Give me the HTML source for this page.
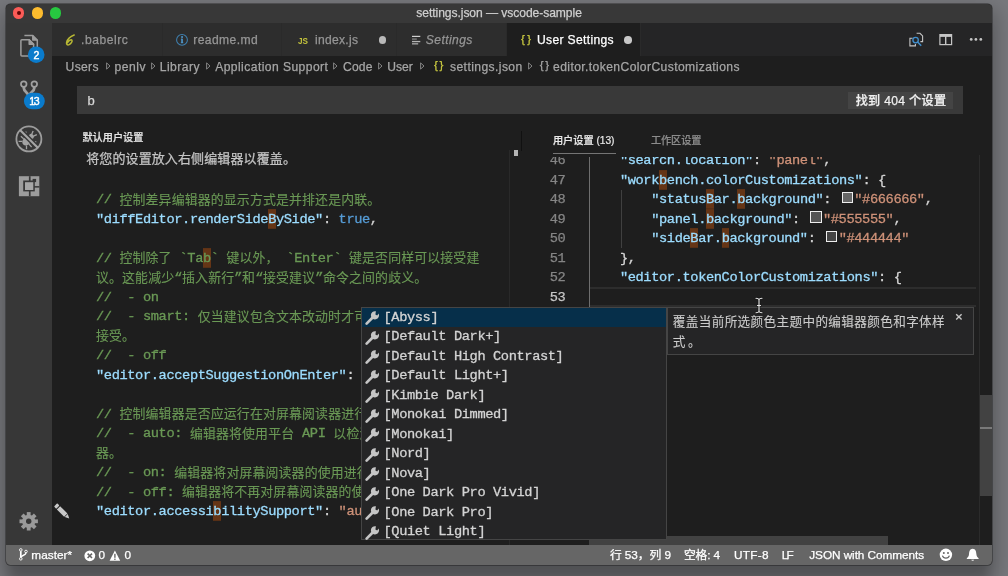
<!DOCTYPE html>
<html lang="zh-CN">
<head>
<meta charset="utf-8">
<title>settings.json — vscode-sample</title>
<style>
*{box-sizing:border-box;margin:0;padding:0}
html,body{width:1008px;height:576px;overflow:hidden}
body{position:relative;background:#77787c;font-family:"Liberation Sans","Noto Sans CJK SC",sans-serif;font-size:12px;color:#ccc}
.abs{position:absolute}
#win{position:absolute;left:6px;top:4px;width:986px;height:561px;border-radius:4.5px;overflow:hidden;background:#1e1e1e;box-shadow:0 0 0 0.7px rgba(0,0,0,.4),0 10px 18px 6px rgba(0,0,0,.22),0 22px 12px -4px rgba(0,0,0,.14)}
#inner{position:absolute;left:-6px;top:-4px;width:1008px;height:576px;will-change:transform}
#title{left:6px;top:4px;width:986px;height:19px;background:#383838}
.tl{position:absolute;top:7.3px;width:11.3px;height:11.3px;border-radius:50%}
#act{left:6px;top:23px;width:46px;height:522px;background:#373737}
#tabs{left:52px;top:23px;width:940px;height:33px;background:#252526}
.tab{position:absolute;top:23px;height:33px;background:#2d2d2d;border-right:1px solid #2a2a2a}
.tab.on{background:#1e1e1e}
#search{left:77px;top:86px;width:885.5px;height:28px;background:#393939}
#status{left:6px;top:545px;width:986px;height:20px;background:#666}
.t{position:absolute;height:40px;line-height:40px;white-space:pre;-webkit-text-stroke:0.25px}
.mono,.ln{font-family:"Liberation Mono","Noto Sans CJK SC",monospace;font-size:13.7px;letter-spacing:-0.39px}
.ln i{font-style:normal;font-size:12.9px;letter-spacing:0.15px;-webkit-text-stroke:0.12px;position:relative;top:0.6px}
.ln{position:absolute;height:19.5px;line-height:19.5px;white-space:pre;color:#d4d4d4;margin-top:0.6px;-webkit-text-stroke:0.3px}
.c{color:#6a9955}.k{color:#9cdcfe}.s{color:#ce9178}.b{color:#569cd6}.p{color:#d4d4d4}
.hl{background:#653516;box-shadow:0 -2.9px 0 #653516,0 1.8px 0 #653516}
.num{position:absolute;left:530px;width:35.4px;height:19.5px;line-height:19.5px;text-align:right;color:#858585;font-family:"Liberation Mono",monospace;font-size:13.7px;letter-spacing:-0.39px;margin-top:0.6px;-webkit-text-stroke:0.25px}
.sw{display:inline-block;width:11.2px;height:11.2px;border:1.2px solid #eee;margin:0 1.4px 0 2.7px;vertical-align:0.1px}
.row{position:absolute;left:361.5px;width:304px;height:19.5px;line-height:19.5px;color:#d4d4d4;font-family:"Liberation Mono",monospace;font-size:13.7px;letter-spacing:-0.39px;-webkit-text-stroke:0.3px;white-space:pre;padding-left:22px}
.arr{position:absolute;top:61.9px}
svg{position:absolute;overflow:visible}
</style>
</head>
<body>
<div id="win"><div id="inner">

<!-- title bar -->
<div id="title" class="abs"></div>
<div class="tl" style="left:12.9px;background:#fc5b57"></div>
<div class="tl" style="left:16.5px;top:10.9px;width:4px;height:4px;background:#5e0605"></div>
<div class="tl" style="left:31.6px;background:#fdbc2e"></div>
<div class="tl" style="left:50px;background:#27c840"></div>

<!-- activity bar -->
<div id="act" class="abs"></div>
<!-- explorer -->
<svg style="left:6px;top:24px" width="48" height="48" viewBox="0 0 48 48"><g fill="none" stroke="#9d9d9d" stroke-width="1.5" stroke-linejoin="round"><path d="M18.4 11.6 L26.8 11.6 L31.3 16.1 L31.3 26"/><path d="M26.8 11.6 L26.8 16.1 L31.3 16.1" fill="#9d9d9d"/><path d="M15.8 15.8 L23.2 15.8 L27.6 20.2 L27.6 31.4 Q27.6 31.9 27.1 31.9 L15.8 31.9 Q14.9 31.9 14.9 31 L14.9 16.7 Q14.9 15.8 15.8 15.8 Z"/><path d="M23.2 15.8 L23.2 20.2 L27.6 20.2 Z" fill="#9d9d9d"/></g><circle cx="30.2" cy="30.7" r="8.3" fill="#0a7bcc"/></svg>
<!-- scm -->
<svg style="left:6px;top:72px" width="48" height="48" viewBox="0 0 48 48"><g fill="none" stroke="#a0a0a0"><circle cx="17.75" cy="12.1" r="2.8" stroke-width="1.7"/><circle cx="28.3" cy="12.1" r="2.8" stroke-width="1.7"/><path d="M17.9 15 L17.9 16.6 C17.9 19.6 22.2 20.4 22.6 24" stroke-width="2.8"/><path d="M28.2 15 L28.2 16.6 C28.2 19.6 23.4 20.4 23 24" stroke-width="2.8"/></g><rect x="17.9" y="20.8" width="20.9" height="16.5" rx="8.25" fill="#0a7bcc"/></svg>
<!-- debug (disabled bug) -->
<svg style="left:6px;top:116px" width="48" height="48" viewBox="0 0 48 48"><circle cx="22.9" cy="22.9" r="12.5" fill="none" stroke="#9d9d9d" stroke-width="1.8"/><g transform="translate(22.9,22.9) rotate(45)" fill="#a2a2a2" stroke="#a2a2a2"><ellipse cx="0" cy="3.3" rx="3.9" ry="4.7" stroke="none"/><ellipse cx="0" cy="-3.6" rx="2.7" ry="2.3" stroke="none"/><path d="M-1.2 -5.2 L-2.6 -8.6 M1.2 -5.2 L2.6 -8.6 M-3.4 1 L-6.6 -1 L-7 -3.4 M3.4 1 L6.6 -1 L7 -3.4 M-3.8 3.6 L-7.6 3.8 M3.8 3.6 L7.6 3.8 M-3 6.4 L-5.6 9 M3 6.4 L5.6 9" fill="none" stroke-width="1.3"/></g><path d="M15.6 15.6 L30.2 30.2" stroke="#373737" stroke-width="5"/><path d="M14 14 L31.8 31.8" stroke="#a6a6a6" stroke-width="2.1"/></svg>
<!-- extensions -->
<svg style="left:6px;top:162px" width="48" height="48" viewBox="0 0 48 48"><rect x="12.9" y="14.2" width="20.4" height="20" fill="#9c9c9c"/><rect x="22.9" y="14.2" width="1.7" height="20" fill="#373737"/><rect x="28" y="24.1" width="5.4" height="1.5" fill="#373737"/><rect x="26.6" y="16.9" width="3.5" height="3.2" fill="#373737"/><rect x="17.2" y="18.5" width="11.6" height="10.9" fill="#373737"/><rect x="19" y="20.2" width="8.3" height="7.8" fill="#a6a6a6"/></svg>
<!-- gear -->
<svg style="left:6px;top:496px" width="48" height="48" viewBox="0 0 48 48"><g transform="translate(22.7,25.3)"><g fill="#9a9a9a"><rect x="-1.9" y="-9.2" width="3.8" height="18.4"/><rect x="-1.9" y="-9.2" width="3.8" height="18.4" transform="rotate(45)"/><rect x="-1.9" y="-9.2" width="3.8" height="18.4" transform="rotate(90)"/><rect x="-1.9" y="-9.2" width="3.8" height="18.4" transform="rotate(135)"/><circle r="6.6"/></g><circle r="2.7" fill="#373737"/></g></svg>


<!-- tabs -->
<div id="tabs" class="abs"></div>
<div class="tab" style="left:52px;width:111px"></div>
<div class="tab" style="left:163px;width:119px"></div>
<div class="tab" style="left:282px;width:115px"></div>
<div class="tab" style="left:397px;width:110px"></div>
<div class="tab on" style="left:507px;width:134px"></div>
<div class="abs" style="left:378.7px;top:36.1px;width:7.6px;height:7.6px;border-radius:50%;background:#b9b9b9"></div>
<div class="abs" style="left:624px;top:36.1px;width:7.6px;height:7.6px;border-radius:50%;background:#c8c8c8"></div>
<!-- babel -->
<svg style="left:64px;top:33px" width="12" height="14" viewBox="0 0 12 14"><path d="M10.2 2 C6.8 3.2 3.4 6.2 2.6 9.4 C2.1 11.6 3.6 12.4 5.2 11.6 C7.2 10.6 8.6 8.4 7.9 7.2 C7.2 6.2 4.6 7.6 3.6 9.6" fill="none" stroke="#b9b934" stroke-width="1.5" stroke-linecap="round"/></svg>
<!-- info -->
<svg style="left:175px;top:33px" width="14" height="14" viewBox="0 0 14 14"><circle cx="7" cy="6.9" r="5.4" fill="none" stroke="#3f80b0" stroke-width="1.05"/><rect x="6.25" y="5.7" width="1.6" height="4.3" fill="#4f9ad0"/><rect x="5.9" y="5.7" width="1.2" height="0.8" fill="#4f9ad0"/><rect x="5.8" y="9.4" width="2.5" height="0.8" fill="#4f9ad0"/><circle cx="7.05" cy="4" r="1" fill="#4f9ad0"/></svg>
<!-- settings list icon -->
<svg style="left:411px;top:35px" width="11" height="11" viewBox="0 0 11 11"><rect x="1" y="0.8" width="8.3" height="1.2" fill="#d0d0d0"/><rect x="1" y="3.3" width="4.8" height="1.6" fill="#747474"/><rect x="1" y="5.9" width="8.3" height="1.3" fill="#b4b4b4"/><rect x="1" y="8" width="6.2" height="1.6" fill="#929292"/></svg>
<!-- open settings -->
<svg style="left:908px;top:31px" width="17" height="17" viewBox="0 0 17 17"><g fill="none" stroke="#c5c5c5" stroke-width="1.1"><path d="M8.6 2.3 L12 2.3 L14.6 4.9 L14.6 10.6 L12.4 10.6"/><path d="M4.6 7.3 L1.9 7.3 L1.9 14.9 L7.4 14.9 L7.4 13"/></g><circle cx="7.6" cy="9.1" r="2.7" fill="none" stroke="#4190cf" stroke-width="1.3"/><path d="M9.6 11.1 L13.2 14.8" stroke="#4190cf" stroke-width="1.5"/></svg>
<!-- split editor -->
<svg style="left:938px;top:32px" width="16" height="15" viewBox="0 0 16 15"><rect x="1.3" y="2" width="12.9" height="11.2" fill="#c5c5c5"/><rect x="2.5" y="4.9" width="4.5" height="7.1" fill="#252526"/><rect x="8.4" y="4.9" width="4.6" height="7.1" fill="#252526"/></svg>
<!-- more -->
<svg style="left:968px;top:36px" width="16" height="7" viewBox="0 0 16 7"><g fill="#c5c5c5"><circle cx="3.2" cy="3.4" r="1.4"/><circle cx="7.9" cy="3.4" r="1.4"/><circle cx="12.8" cy="3.4" r="1.4"/></g></svg>
<!-- js -->
<svg style="left:297px;top:34px" width="13" height="12" viewBox="0 0 13 12"><text x="1" y="9.9" font-family="'Liberation Sans',sans-serif" font-weight="bold" font-size="9.7" fill="#c4c43c" textLength="10" lengthAdjust="spacingAndGlyphs">JS</text></svg>


<!-- breadcrumb arrows -->
<svg class="arr" style="left:105.8px" width="5" height="8" viewBox="0 0 5 8"><path d="M0.6 0.9 L0.6 7.1 L4 4 Z" fill="none" stroke="#909090" stroke-width="0.9" stroke-linejoin="round"/></svg>
<svg class="arr" style="left:151.2px" width="5" height="8" viewBox="0 0 5 8"><path d="M0.6 0.9 L0.6 7.1 L4 4 Z" fill="none" stroke="#909090" stroke-width="0.9" stroke-linejoin="round"/></svg>
<svg class="arr" style="left:206.2px" width="5" height="8" viewBox="0 0 5 8"><path d="M0.6 0.9 L0.6 7.1 L4 4 Z" fill="none" stroke="#909090" stroke-width="0.9" stroke-linejoin="round"/></svg>
<svg class="arr" style="left:333.1px" width="5" height="8" viewBox="0 0 5 8"><path d="M0.6 0.9 L0.6 7.1 L4 4 Z" fill="none" stroke="#909090" stroke-width="0.9" stroke-linejoin="round"/></svg>
<svg class="arr" style="left:377.7px" width="5" height="8" viewBox="0 0 5 8"><path d="M0.6 0.9 L0.6 7.1 L4 4 Z" fill="none" stroke="#909090" stroke-width="0.9" stroke-linejoin="round"/></svg>
<svg class="arr" style="left:419.8px" width="5" height="8" viewBox="0 0 5 8"><path d="M0.6 0.9 L0.6 7.1 L4 4 Z" fill="none" stroke="#909090" stroke-width="0.9" stroke-linejoin="round"/></svg>
<svg class="arr" style="left:528.2px" width="5" height="8" viewBox="0 0 5 8"><path d="M0.6 0.9 L0.6 7.1 L4 4 Z" fill="none" stroke="#909090" stroke-width="0.9" stroke-linejoin="round"/></svg>

<!-- search -->
<div id="search" class="abs"></div>
<div class="abs" style="left:848px;top:92.2px;width:105px;height:16.5px;background:#444"></div>

<!-- ===== left editor (default settings) ===== -->
<div class="abs" style="left:52px;top:150px;width:458px;height:395px;overflow:hidden">
<div class="abs" style="left:-52px;top:-150px;width:1008px;height:576px">
<div class="ln" style="left:96px;top:189.5px"><span class="c">// <i>控制差异编辑器的显示方式是并排还是内联。</i></span></div>
<div class="ln" style="left:96px;top:209px"><span class="k">"diffEditor.renderSide<span class="hl">B</span>ySide"</span>: <span class="b">true</span>,</div>
<div class="ln" style="left:96px;top:248px"><span class="c">// <i>控制除了</i> `Ta<span class="hl">b</span>` <i>键以外，</i> `Enter` <i>键是否同样可以接受建</i></span></div>
<div class="ln" style="left:96px;top:267.5px"><span class="c"><i>议。这能减少</i>“<i>插入新行</i>”<i>和</i>“<i>接受建议</i>”<i>命令之间的歧义。</i></span></div>
<div class="ln" style="left:96px;top:287px"><span class="c">//  - on</span></div>
<div class="ln" style="left:96px;top:306.5px"><span class="c">//  - smart: <i>仅当建议包含文本改动时才可使用</i> `Enter` <i>键</i></span></div>
<div class="ln" style="left:96px;top:326px"><span class="c"><i>接受。</i></span></div>
<div class="ln" style="left:96px;top:345.5px"><span class="c">//  - off</span></div>
<div class="ln" style="left:96px;top:365px"><span class="k">"editor.acceptSuggestionOnEnter"</span>: <span class="s">"on"</span>,</div>
<div class="ln" style="left:96px;top:404px"><span class="c">// <i>控制编辑器是否应运行在对屏幕阅读器进行优化的模式。</i></span></div>
<div class="ln" style="left:96px;top:423.5px"><span class="c">//  - auto: <i>编辑器将使用平台</i> API <i>以检测是否附加了屏幕阅读</i></span></div>
<div class="ln" style="left:96px;top:443px"><span class="c"><i>器。</i></span></div>
<div class="ln" style="left:96px;top:462.5px"><span class="c">//  - on: <i>编辑器将对屏幕阅读器的使用进行永久优化。</i></span></div>
<div class="ln" style="left:96px;top:482px"><span class="c">//  - off: <i>编辑器将不再对屏幕阅读器的使用进行优化。</i></span></div>
<div class="ln" style="left:96px;top:501.5px"><span class="k">"editor.accessi<span class="hl">b</span>ilitySupport"</span>: <span class="s">"auto"</span>,</div>
</div></div>
<!-- pencil -->
<svg style="left:54px;top:503px" width="18" height="18" viewBox="0 0 18 18"><g transform="translate(1.6,1.9) rotate(45)"><rect x="0" y="-2.3" width="3.2" height="4.6" rx="0.8" fill="#c8c8c8"/><rect x="4.1" y="-2.3" width="10.3" height="4.6" fill="#c8c8c8"/><path d="M15.1 -2.1 L19.3 0 L15.1 2.1 Z" fill="#c8c8c8"/></g></svg>
<!-- separators between editors -->
<div class="abs" style="left:520.7px;top:131px;width:1.2px;height:19.5px;background:#111"></div>
<div class="abs" style="left:509px;top:150px;width:1px;height:395px;background:#292929"></div>
<div class="abs" style="left:513.6px;top:150.3px;width:4.9px;height:5.7px;background:#b4b4b4"></div>
<div class="abs" style="left:552.8px;top:153px;width:63px;height:1px;background:#757575"></div>

<!-- ===== right editor (user settings) ===== -->
<div class="abs" style="left:522px;top:157px;width:470px;height:388px;overflow:hidden">
<div class="abs" style="left:-522px;top:-157px;width:1008px;height:576px">
<!-- current line -->
<div class="abs" style="left:589px;top:287.1px;width:387px;height:20.2px;border-top:2px solid #2d2d2d;border-bottom:2px solid #2d2d2d"></div>
<!-- indent guides -->
<div class="abs" style="left:588.9px;top:150px;width:1.3px;height:395px;background:#6e6e6e"></div>
<div class="abs" style="left:620.7px;top:189.5px;width:1px;height:58.5px;background:#404040"></div>
<div class="num" style="top:150.5px">46</div>
<div class="num" style="top:170px">47</div>
<div class="num" style="top:189.5px">48</div>
<div class="num" style="top:209px">49</div>
<div class="num" style="top:228.5px">50</div>
<div class="num" style="top:248px">51</div>
<div class="num" style="top:267.5px">52</div>
<div class="num" style="top:287px;color:#c6c6c6">53</div>
<div class="ln" style="left:588.6px;top:150.5px">    <span class="k">"search.location"</span>: <span class="s">"panel"</span>,</div>
<div class="ln" style="left:588.6px;top:170px">    <span class="k">"work<span class="hl">b</span>ench.colorCustomizations"</span>: {</div>
<div class="ln" style="left:588.6px;top:189.5px">        <span class="k">"status<span class="hl">B</span>ar.<span class="hl">b</span>ackground"</span>: <span class="sw" style="background:#666"></span><span class="s">"#666666"</span>,</div>
<div class="ln" style="left:588.6px;top:209px">        <span class="k">"panel.<span class="hl">b</span>ackground"</span>: <span class="sw" style="background:#555"></span><span class="s">"#555555"</span>,</div>
<div class="ln" style="left:588.6px;top:228.5px">        <span class="k">"side<span class="hl">B</span>ar.<span class="hl">b</span>ackground"</span>: <span class="sw" style="background:#444"></span><span class="s">"#444444"</span></div>
<div class="ln" style="left:588.6px;top:248px">    },</div>
<div class="ln" style="left:588.6px;top:267.5px">    <span class="k">"editor.tokenColorCustomizations"</span>: {</div>
</div></div>
<!-- vertical scrollbar -->
<div class="abs" style="left:979px;top:155px;width:1px;height:390px;background:#2b2b2b"></div>
<div class="abs" style="left:979.5px;top:394.5px;width:12.5px;height:101.5px;background:#424242"></div>
<div class="abs" style="left:979.5px;top:426.8px;width:12.5px;height:1.8px;background:#7a7a7a"></div>
<!-- horizontal scrollbar -->
<div class="abs" style="left:589px;top:536.3px;width:299px;height:8.7px;background:#424242"></div>

<!-- ===== suggest widget ===== -->
<div class="abs" style="left:360.6px;top:306.5px;width:306.7px;height:233.6px;background:#252526;border:1px solid #454545"></div>
<div class="abs" style="left:361.6px;top:307.5px;width:304.7px;height:19.5px;background:#062f4a"></div>
<div class="row" style="top:307.5px"><svg style="left:3px;top:3.5px" width="15" height="14" viewBox="0 0 15 14"><path d="M1.6 12.6 L8.4 5.8" stroke="#c5c5c5" stroke-width="2.7" stroke-linecap="round" fill="none"/><path d="M13.6 2.4 A4.1 4.1 0 1 1 10.9 0.3 L10.4 3.5 L12.2 4.6 Z" fill="#c5c5c5"/></svg>[Abyss]</div>
<div class="row" style="top:327.0px"><svg style="left:3px;top:3.5px" width="15" height="14" viewBox="0 0 15 14"><path d="M1.6 12.6 L8.4 5.8" stroke="#c5c5c5" stroke-width="2.7" stroke-linecap="round" fill="none"/><path d="M13.6 2.4 A4.1 4.1 0 1 1 10.9 0.3 L10.4 3.5 L12.2 4.6 Z" fill="#c5c5c5"/></svg>[Default Dark+]</div>
<div class="row" style="top:346.5px"><svg style="left:3px;top:3.5px" width="15" height="14" viewBox="0 0 15 14"><path d="M1.6 12.6 L8.4 5.8" stroke="#c5c5c5" stroke-width="2.7" stroke-linecap="round" fill="none"/><path d="M13.6 2.4 A4.1 4.1 0 1 1 10.9 0.3 L10.4 3.5 L12.2 4.6 Z" fill="#c5c5c5"/></svg>[Default High Contrast]</div>
<div class="row" style="top:366.0px"><svg style="left:3px;top:3.5px" width="15" height="14" viewBox="0 0 15 14"><path d="M1.6 12.6 L8.4 5.8" stroke="#c5c5c5" stroke-width="2.7" stroke-linecap="round" fill="none"/><path d="M13.6 2.4 A4.1 4.1 0 1 1 10.9 0.3 L10.4 3.5 L12.2 4.6 Z" fill="#c5c5c5"/></svg>[Default Light+]</div>
<div class="row" style="top:385.5px"><svg style="left:3px;top:3.5px" width="15" height="14" viewBox="0 0 15 14"><path d="M1.6 12.6 L8.4 5.8" stroke="#c5c5c5" stroke-width="2.7" stroke-linecap="round" fill="none"/><path d="M13.6 2.4 A4.1 4.1 0 1 1 10.9 0.3 L10.4 3.5 L12.2 4.6 Z" fill="#c5c5c5"/></svg>[Kimbie Dark]</div>
<div class="row" style="top:405.0px"><svg style="left:3px;top:3.5px" width="15" height="14" viewBox="0 0 15 14"><path d="M1.6 12.6 L8.4 5.8" stroke="#c5c5c5" stroke-width="2.7" stroke-linecap="round" fill="none"/><path d="M13.6 2.4 A4.1 4.1 0 1 1 10.9 0.3 L10.4 3.5 L12.2 4.6 Z" fill="#c5c5c5"/></svg>[Monokai Dimmed]</div>
<div class="row" style="top:424.5px"><svg style="left:3px;top:3.5px" width="15" height="14" viewBox="0 0 15 14"><path d="M1.6 12.6 L8.4 5.8" stroke="#c5c5c5" stroke-width="2.7" stroke-linecap="round" fill="none"/><path d="M13.6 2.4 A4.1 4.1 0 1 1 10.9 0.3 L10.4 3.5 L12.2 4.6 Z" fill="#c5c5c5"/></svg>[Monokai]</div>
<div class="row" style="top:444.0px"><svg style="left:3px;top:3.5px" width="15" height="14" viewBox="0 0 15 14"><path d="M1.6 12.6 L8.4 5.8" stroke="#c5c5c5" stroke-width="2.7" stroke-linecap="round" fill="none"/><path d="M13.6 2.4 A4.1 4.1 0 1 1 10.9 0.3 L10.4 3.5 L12.2 4.6 Z" fill="#c5c5c5"/></svg>[Nord]</div>
<div class="row" style="top:463.5px"><svg style="left:3px;top:3.5px" width="15" height="14" viewBox="0 0 15 14"><path d="M1.6 12.6 L8.4 5.8" stroke="#c5c5c5" stroke-width="2.7" stroke-linecap="round" fill="none"/><path d="M13.6 2.4 A4.1 4.1 0 1 1 10.9 0.3 L10.4 3.5 L12.2 4.6 Z" fill="#c5c5c5"/></svg>[Nova]</div>
<div class="row" style="top:483.0px"><svg style="left:3px;top:3.5px" width="15" height="14" viewBox="0 0 15 14"><path d="M1.6 12.6 L8.4 5.8" stroke="#c5c5c5" stroke-width="2.7" stroke-linecap="round" fill="none"/><path d="M13.6 2.4 A4.1 4.1 0 1 1 10.9 0.3 L10.4 3.5 L12.2 4.6 Z" fill="#c5c5c5"/></svg>[One Dark Pro Vivid]</div>
<div class="row" style="top:502.5px"><svg style="left:3px;top:3.5px" width="15" height="14" viewBox="0 0 15 14"><path d="M1.6 12.6 L8.4 5.8" stroke="#c5c5c5" stroke-width="2.7" stroke-linecap="round" fill="none"/><path d="M13.6 2.4 A4.1 4.1 0 1 1 10.9 0.3 L10.4 3.5 L12.2 4.6 Z" fill="#c5c5c5"/></svg>[One Dark Pro]</div>
<div class="row" style="top:522.0px"><svg style="left:3px;top:3.5px" width="15" height="14" viewBox="0 0 15 14"><path d="M1.6 12.6 L8.4 5.8" stroke="#c5c5c5" stroke-width="2.7" stroke-linecap="round" fill="none"/><path d="M13.6 2.4 A4.1 4.1 0 1 1 10.9 0.3 L10.4 3.5 L12.2 4.6 Z" fill="#c5c5c5"/></svg>[Quiet Light]</div>

<!-- ===== doc widget ===== -->
<div class="abs" style="left:667.3px;top:306.8px;width:306.5px;height:48px;background:#252526;border:1px solid #454545"></div>
<svg style="left:954.5px;top:313.2px" width="8" height="8" viewBox="0 0 8 8"><path d="M1.2 1.2 L6.6 6.6 M6.6 1.2 L1.2 6.6" stroke="#c5c5c5" stroke-width="1.4" fill="none"/></svg>
<!-- mouse I-beam -->
<svg style="left:753.5px;top:297px" width="10" height="17" viewBox="0 0 10 17"><path d="M2 1.2 C3.6 1.2 4.6 1.6 5 2.6 C5.4 1.6 6.4 1.2 8 1.2 M5 2.6 L5 14.4 M2 15.8 C3.6 15.8 4.6 15.4 5 14.4 C5.4 15.4 6.4 15.8 8 15.8 M3.4 8.5 L6.6 8.5" stroke="#1a1a1a" stroke-width="2.6" fill="none" stroke-linecap="round"/><path d="M2 1.2 C3.6 1.2 4.6 1.6 5 2.6 C5.4 1.6 6.4 1.2 8 1.2 M5 2.6 L5 14.4 M2 15.8 C3.6 15.8 4.6 15.4 5 14.4 C5.4 15.4 6.4 15.8 8 15.8 M3.4 8.5 L6.6 8.5" stroke="#e8e8e8" stroke-width="1.1" fill="none" stroke-linecap="round"/></svg>


<!-- status bar -->
<div id="status" class="abs"></div>
<!-- git branch -->
<svg style="left:18px;top:548px" width="11" height="13" viewBox="0 0 11 13"><g fill="none" stroke="#fff"><circle cx="2.8" cy="1.9" r="1.3" stroke-width="0.9"/><circle cx="2.8" cy="10.8" r="1.3" stroke-width="0.9"/><circle cx="8" cy="3.5" r="1.3" stroke-width="0.9"/><path d="M2.8 3.2 L2.8 9.5" stroke-width="1.7"/><path d="M8 4.8 C8 7.4 3.6 7 3 9.4" stroke-width="1.4"/></g></svg>
<!-- error -->
<svg style="left:84px;top:549.5px" width="12" height="12" viewBox="0 0 12 12"><circle cx="5.8" cy="5.8" r="5.4" fill="#fff"/><path d="M3.6 3.6 L8 8 M8 3.6 L3.6 8" stroke="#666" stroke-width="1.6"/></svg>
<!-- warning -->
<svg style="left:109px;top:549.5px" width="12" height="12" viewBox="0 0 12 12"><path d="M5.9 0.6 L11.2 10.8 L0.6 10.8 Z" fill="#fff"/><rect x="5.2" y="3.8" width="1.4" height="4" fill="#666"/><rect x="5.2" y="8.6" width="1.4" height="1.3" fill="#666"/></svg>
<!-- smiley -->
<svg style="left:939px;top:548px" width="14" height="14" viewBox="0 0 14 14"><circle cx="6.9" cy="6.8" r="6.2" fill="#fff"/><circle cx="4.8" cy="5" r="1" fill="#666"/><circle cx="9" cy="5" r="1" fill="#666"/><path d="M3.4 7.6 C4.4 11 9.4 11 10.4 7.6" fill="none" stroke="#666" stroke-width="1.2"/></svg>
<!-- bell -->
<svg style="left:966px;top:548px" width="14" height="14" viewBox="0 0 14 14"><path d="M6.7 0.8 C9.6 0.8 10.2 3.6 10.4 6.2 C10.6 8.4 11.6 9.4 12.6 10.2 L12.6 11 L0.8 11 L0.8 10.2 C1.8 9.4 2.8 8.4 3 6.2 C3.2 3.6 3.8 0.8 6.7 0.8 Z" fill="#fff"/><path d="M5.2 11.8 A1.6 1.6 0 0 0 8.2 11.8 Z" fill="#fff"/></svg>


<div class="t" style="left:416.30px;top:-7.40px;font-size:12.1px;color:#cfcfcf;letter-spacing:-0.064px;">settings.json — vscode-sample</div>
<div class="t" style="left:81.00px;top:20.00px;font-size:12.1px;color:#969696;letter-spacing:0.543px;">.babelrc</div>
<div class="t" style="left:193.30px;top:20.00px;font-size:12.1px;color:#969696;letter-spacing:0.400px;">readme.md</div>
<div class="t" style="left:315.00px;top:20.00px;font-size:12.1px;color:#969696;letter-spacing:0.286px;">index.js</div>
<div class="t" style="left:425.80px;top:20.00px;font-size:12.1px;color:#969696;letter-spacing:0.414px;font-style:italic;">Settings</div>
<div class="t" style="left:537.00px;top:20.00px;font-size:12.1px;color:#ffffff;letter-spacing:0.333px;">User Settings</div>
<div class="t" style="left:520.90px;top:18.60px;font-size:11.5px;color:#cbcb41;letter-spacing:2.600px;">{}</div>
<div class="t" style="left:65.60px;top:46.60px;font-size:12.1px;color:#a6a6a6;letter-spacing:0.325px;">Users</div>
<div class="t" style="left:114.50px;top:46.60px;font-size:12.1px;color:#a6a6a6;letter-spacing:0.562px;">penlv</div>
<div class="t" style="left:159.70px;top:46.60px;font-size:12.1px;color:#a6a6a6;letter-spacing:0.483px;">Library</div>
<div class="t" style="left:215.20px;top:46.60px;font-size:12.1px;color:#a6a6a6;letter-spacing:0.433px;">Application Support</div>
<div class="t" style="left:343.00px;top:46.60px;font-size:12.1px;color:#a6a6a6;letter-spacing:0.167px;">Code</div>
<div class="t" style="left:387.20px;top:46.60px;font-size:12.1px;color:#a6a6a6;letter-spacing:0.033px;">User</div>
<div class="t" style="left:434.00px;top:44.70px;font-size:11.5px;color:#cbcb41;letter-spacing:1.600px;">{}</div>
<div class="t" style="left:450.00px;top:46.60px;font-size:12.1px;color:#a6a6a6;letter-spacing:0.417px;">settings.json</div>
<div class="t" style="left:539.80px;top:44.70px;font-size:11.5px;color:#a6a6a6;letter-spacing:1.500px;">{}</div>
<div class="t" style="left:553.00px;top:46.60px;font-size:12.1px;color:#a6a6a6;letter-spacing:0.413px;">editor.tokenColorCustomizations</div>
<div class="t" style="left:87.40px;top:81.20px;font-size:13.0px;color:#d8d8d8;letter-spacing:0.000px;">b</div>
<div class="t" style="left:855.70px;top:81.00px;font-size:12.1px;color:#f0f0f0;letter-spacing:0.333px;font-weight:500;">找到 404 个设置</div>
<div class="t" style="left:82.40px;top:117.80px;font-size:10.2px;color:#e4e4e4;letter-spacing:-0.020px;font-weight:500;-webkit-text-stroke:0.2px;">默认用户设置</div>
<div class="t" style="left:86.20px;top:138.80px;font-size:13.0px;color:#c4c4c4;letter-spacing:0.113px;">将您的设置放入右侧编辑器以覆盖。</div>
<div class="t" style="left:552.90px;top:120.80px;font-size:10.2px;color:#e8e8e8;letter-spacing:-0.013px;font-weight:500;-webkit-text-stroke:0.2px;">用户设置 (13)</div>
<div class="t" style="left:651.00px;top:120.80px;font-size:10.2px;color:#8c8c8c;letter-spacing:-0.125px;font-weight:500;-webkit-text-stroke:0.2px;">工作区设置</div>
<div class="t" style="left:31.30px;top:534.50px;font-size:11.8px;color:#ffffff;letter-spacing:0.017px;">master*</div>
<div class="t" style="left:98.60px;top:534.50px;font-size:11.8px;color:#ffffff;letter-spacing:0.000px;">0</div>
<div class="t" style="left:124.40px;top:534.50px;font-size:11.8px;color:#ffffff;letter-spacing:0.000px;">0</div>
<div class="t" style="left:609.90px;top:534.50px;font-size:11.8px;color:#ffffff;letter-spacing:-0.071px;">行 53，列 9</div>
<div class="t" style="left:684.00px;top:534.50px;font-size:11.8px;color:#ffffff;letter-spacing:-0.175px;">空格: 4</div>
<div class="t" style="left:733.90px;top:534.50px;font-size:11.8px;color:#ffffff;letter-spacing:0.300px;">UTF-8</div>
<div class="t" style="left:781.80px;top:534.50px;font-size:11.8px;color:#ffffff;letter-spacing:-1.900px;">LF</div>
<div class="t" style="left:809.30px;top:534.50px;font-size:11.8px;color:#ffffff;letter-spacing:-0.076px;">JSON with Comments</div>
<div class="t" style="left:672.80px;top:302.00px;font-size:12.6px;color:#cccccc;letter-spacing:0.370px;-webkit-text-stroke:0.1px;">覆盖当前所选颜色主题中的编辑器颜色和字体样</div>
<div class="t" style="left:672.80px;top:321.50px;font-size:12.6px;color:#cccccc;letter-spacing:2.600px;-webkit-text-stroke:0.1px;">式。</div>
<div class="t" style="left:33.50px;top:34.70px;font-size:10.6px;color:#ffffff;letter-spacing:0.000px;-webkit-text-stroke:0.4px;">2</div>
<div class="t" style="left:29.20px;top:81.00px;font-size:10.6px;color:#ffffff;letter-spacing:-1.450px;-webkit-text-stroke:0.4px;">13</div>

</div></div>
</body>
</html>
